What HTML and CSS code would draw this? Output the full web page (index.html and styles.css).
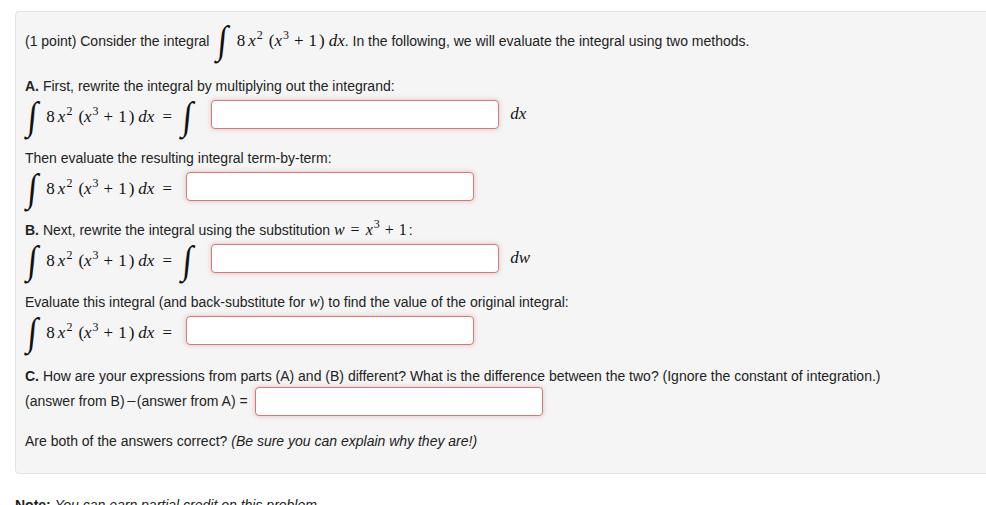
FILE: index.html
```html
<!DOCTYPE html>
<html>
<head>
<meta charset="utf-8">
<link rel="stylesheet" href="styles.css">
</head>
<body>
<div class="page">
  <div class="panel">
    <div class="line first">(1 point) Consider the integral <span class="math"><span class="int">∫</span><span class="n">8</span><span class="v">x</span><sup class="s1">2</sup><span class="p">(</span><span class="v">x</span><sup class="s2">3</sup><span class="op">+</span><span class="n1">1</span><span class="p2">)</span><span class="v d">dx</span></span>. In the following, we will evaluate the integral using two methods.</div>

    <div class="line text gap-a"><b>A.</b> First, rewrite the integral by multiplying out the integrand:</div>
    <div class="row">
      <span class="math"><span class="int">∫</span><span class="n">8</span><span class="v">x</span><sup class="s1">2</sup><span class="p">(</span><span class="v">x</span><sup class="s2">3</sup><span class="op">+</span><span class="n1">1</span><span class="p2">)</span><span class="v d">dx</span><span class="eq">=</span><span class="int int2">∫</span></span>
      <span class="box box-a"></span>
      <span class="math after"><span class="v">dx</span></span>
    </div>

    <div class="line text gap">Then evaluate the resulting integral term-by-term:</div>
    <div class="row">
      <span class="math"><span class="int">∫</span><span class="n">8</span><span class="v">x</span><sup class="s1">2</sup><span class="p">(</span><span class="v">x</span><sup class="s2">3</sup><span class="op">+</span><span class="n1">1</span><span class="p2">)</span><span class="v d">dx</span><span class="eq">=</span></span>
      <span class="box"></span>
    </div>

    <div class="line text gap"><b>B.</b> Next, rewrite the integral using the substitution <span class="math small"><span class="v">w</span><span class="eq">=</span><span class="v">x</span><sup class="s2">3</sup><span class="op">+</span><span class="n1">1</span></span>:</div>
    <div class="row">
      <span class="math"><span class="int">∫</span><span class="n">8</span><span class="v">x</span><sup class="s1">2</sup><span class="p">(</span><span class="v">x</span><sup class="s2">3</sup><span class="op">+</span><span class="n1">1</span><span class="p2">)</span><span class="v d">dx</span><span class="eq">=</span><span class="int int2">∫</span></span>
      <span class="box box-a"></span>
      <span class="math after"><span class="v">dw</span></span>
    </div>

    <div class="line text gap">Evaluate this integral (and back-substitute for <span class="math small"><span class="v">w</span></span>) to find the value of the original integral:</div>
    <div class="row">
      <span class="math"><span class="int">∫</span><span class="n">8</span><span class="v">x</span><sup class="s1">2</sup><span class="p">(</span><span class="v">x</span><sup class="s2">3</sup><span class="op">+</span><span class="n1">1</span><span class="p2">)</span><span class="v d">dx</span><span class="eq">=</span></span>
      <span class="box"></span>
    </div>

    <div class="line text gap-c"><b>C.</b> How are your expressions from parts (A) and (B) different? What is the difference between the two? (Ignore the constant of integration.)</div>
    <div class="row row-c">
      <span>(answer from B)<span class="minus">−</span>(answer from A) =</span>
      <span class="box"></span>
    </div>

    <div class="line text gap-last">Are both of the answers correct? <i>(Be sure you can explain why they are!)</i></div>
  </div>
  <div class="note"><b>Note:</b> <i>You can earn partial credit on this problem.</i></div>
</div>
</body>
</html>
```
FILE: styles.css
```css
html, body {
  margin: 0;
  padding: 0;
  background: #ffffff;
  overflow: hidden;
}
body {
  font-family: "Liberation Sans", Arial, sans-serif;
  font-size: 14px;
  color: #222222;
}
.page {
  padding: 11px 0 0 15px;
  width: 1100px;
}
.panel {
  width: 1000px;
  background: #f5f5f5;
  border: 1px solid #e3e3e3;
  border-radius: 4px;
  padding: 10px 9px 23px 9px;
  box-sizing: border-box;
}
.line {
  line-height: 18px;
  white-space: nowrap;
}
.first {
  height: 38px;
  line-height: 38px;
}
.first .math {
  margin-left: 2px;
}
.gap-a { margin-top: 17px; }
.gap { margin-top: 20px; }
.gap-c { margin-top: 22px; }
.gap-last { margin-top: 16px; }
.row {
  display: flex;
  align-items: center;
  height: 30px;
  margin-top: 4px;
  white-space: nowrap;
}
.row-c {
  margin-top: 1px;
}
.row-c .box {
  margin-left: 7px;
}
.minus {
  display: inline-block;
  transform: scaleX(1.2);
  margin: 0 2px;
}
.math {
  font-family: "Liberation Serif", "DejaVu Serif", serif;
  font-size: 17px;
  color: #111111;
  display: inline-flex;
  align-items: baseline;
  vertical-align: baseline;
}
.math.small {
  font-size: 16px;
}
.math .v {
  font-style: italic;
}
.math .n {
  margin-right: 3px;
}
.math .s1 {
  margin-right: 6px;
}
.math .s2 {
  margin-right: 0;
}
.math .n1 {
  margin-right: 2px;
}
.math .d {
  margin-left: 4px;
}
.math sup {
  font-size: 12px;
  position: relative;
  top: -7px;
  line-height: 0;
  vertical-align: baseline;
  margin-left: 1px;
}
.math .op {
  margin: 0 5px;
}
.math .eq {
  margin: 0 6px 0 8px;
}
.math.small .eq {
  margin: 0 6px;
}
.math .int {
  font-family: "Liberation Serif", serif;
  font-size: 34px;
  display: inline-block;
  transform: scaleY(1.15) skewX(-6deg);
  margin: 0 9px 0 3px;
  line-height: 18px;
  position: relative;
  top: 5px;
}
.math .int2 {
  margin: 0 0 0 5px;
}
.math.after {
  margin-left: 11px;
}
.box {
  display: inline-block;
  width: 286px;
  height: 27px;
  background: #ffffff;
  border: 1px solid #d27a7a;
  border-radius: 4px;
  box-shadow: 0 0 5px rgba(210, 110, 110, 0.45);
  margin-left: 8px;
}
.box-a {
  margin-left: 19px;
}
.note {
  margin-top: 22px;
  line-height: 18px;
  white-space: nowrap;
}
```
